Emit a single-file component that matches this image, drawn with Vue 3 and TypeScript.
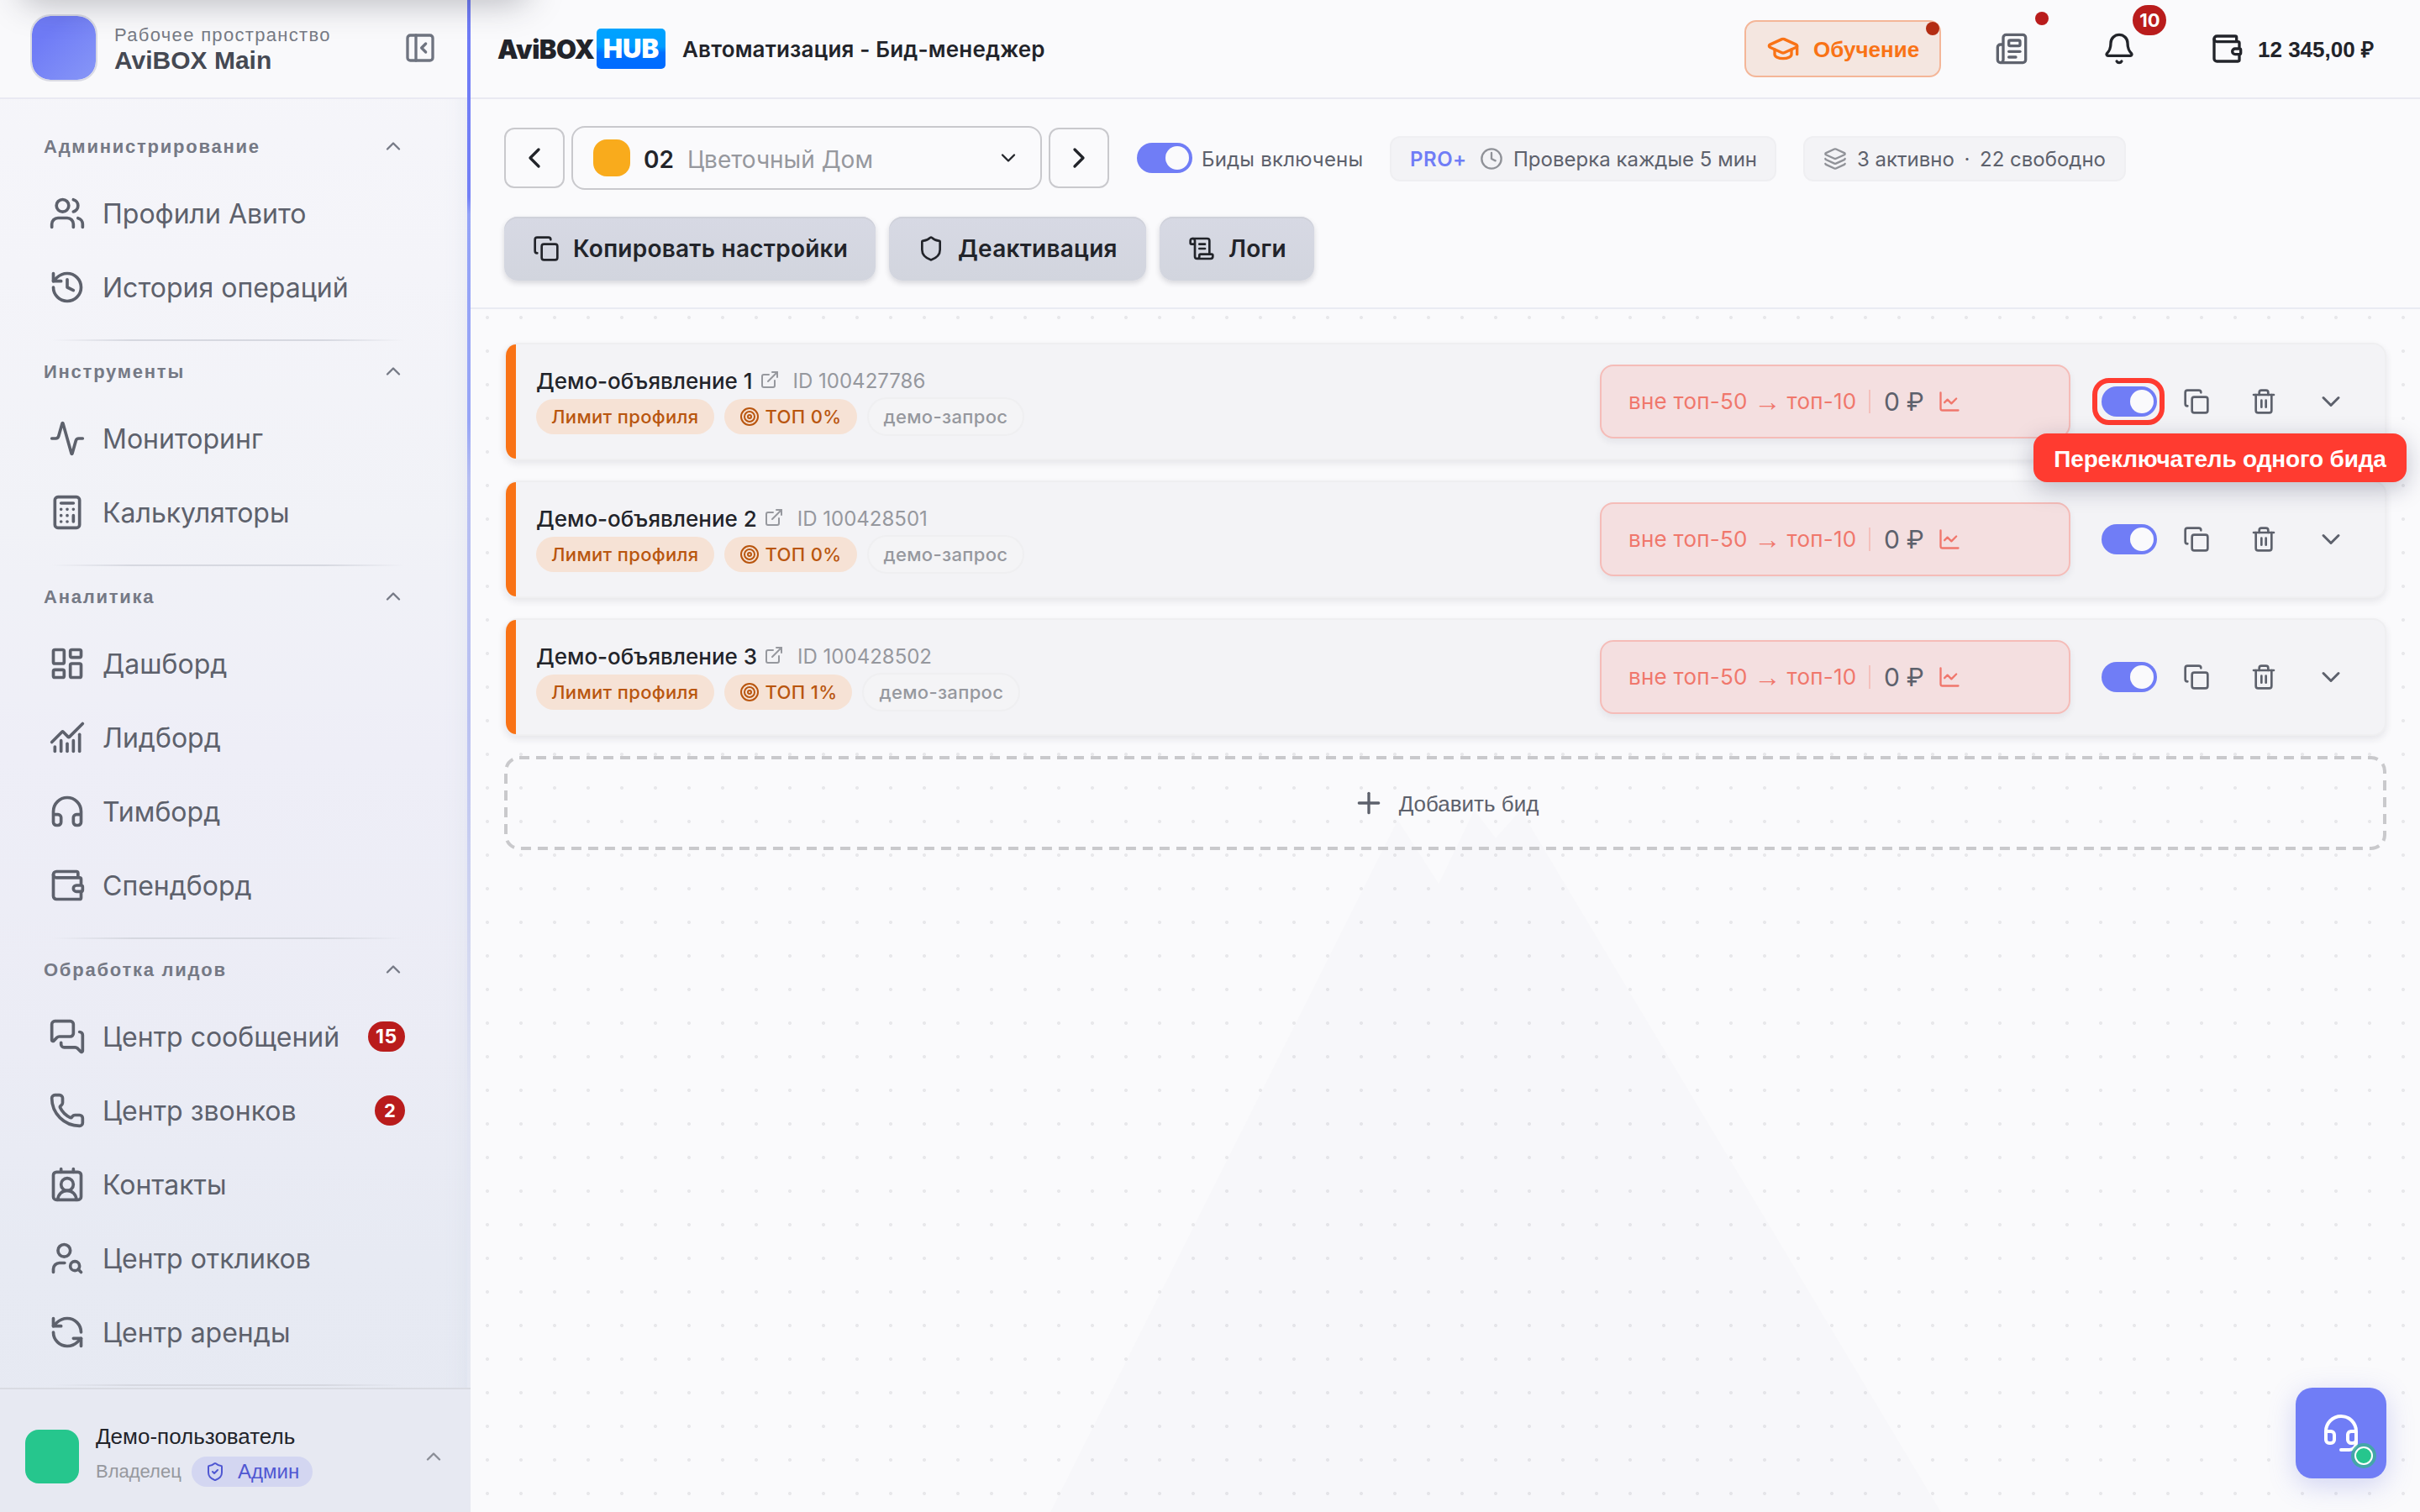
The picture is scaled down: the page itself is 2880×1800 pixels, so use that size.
<script setup lang="ts">
interface NavItem {
  icon: string
  label: string
  badge?: string
}
interface NavSection {
  title: string
  items: NavItem[]
}
interface Bid {
  title: string
  id: string
  top: string
  highlighted?: boolean
}

const icons: Record<string, string> = {
  panel: '<rect x="3" y="3" width="18" height="18" rx="2"/><path d="M9 3v18"/><path d="m16 15-3-3 3-3"/>',
  users: '<path d="M16 21v-2a4 4 0 0 0-4-4H6a4 4 0 0 0-4 4v2"/><circle cx="9" cy="7" r="4"/><path d="M22 21v-2a4 4 0 0 0-3-3.87"/><path d="M16 3.13a4 4 0 0 1 0 7.75"/>',
  history: '<path d="M3 12a9 9 0 1 0 9-9 9.75 9.75 0 0 0-6.74 2.74L3 8"/><path d="M3 3v5h5"/><path d="M12 7v5l4 2"/>',
  activity: '<path d="M22 12h-2.48a2 2 0 0 0-1.93 1.46l-2.35 8.36a.25.25 0 0 1-.48 0L9.24 2.18a.25.25 0 0 0-.48 0l-2.35 8.36A2 2 0 0 1 4.49 12H2"/>',
  calculator: '<rect x="4" y="2" width="16" height="20" rx="2"/><path d="M8 6h8"/><path d="M16 14v4"/><path d="M16 10h.01M12 10h.01M8 10h.01M12 14h.01M8 14h.01M12 18h.01M8 18h.01"/>',
  dashboard: '<rect x="3" y="3" width="7" height="9" rx="1"/><rect x="14" y="3" width="7" height="5" rx="1"/><rect x="14" y="12" width="7" height="9" rx="1"/><rect x="3" y="16" width="7" height="5" rx="1"/>',
  chartCombined: '<path d="M12 16v5"/><path d="M16 14v7"/><path d="M20 10v11"/><path d="m22 3-8.646 8.646a.5.5 0 0 1-.708 0L9.354 8.354a.5.5 0 0 0-.707 0L2 15"/><path d="M4 18v3"/><path d="M8 14v7"/>',
  headphones: '<path d="M3 14h3a2 2 0 0 1 2 2v3a2 2 0 0 1-2 2H5a2 2 0 0 1-2-2v-7a9 9 0 0 1 18 0v7a2 2 0 0 1-2 2h-1a2 2 0 0 1-2-2v-3a2 2 0 0 1 2-2h3"/>',
  wallet: '<path d="M19 7V4a1 1 0 0 0-1-1H5a2 2 0 0 0 0 4h15a1 1 0 0 1 1 1v4h-3a2 2 0 0 0 0 4h3a1 1 0 0 0 1-1v-2a1 1 0 0 0-1-1"/><path d="M3 5v14a2 2 0 0 0 2 2h15a1 1 0 0 0 1-1v-4"/>',
  messages: '<path d="M16 10a2 2 0 0 1-2 2H6.828a2 2 0 0 0-1.414.586l-2.202 2.202A.71.71 0 0 1 2 14.286V4a2 2 0 0 1 2-2h10a2 2 0 0 1 2 2z"/><path d="M20 9a2 2 0 0 1 2 2v10.286a.71.71 0 0 1-1.212.502l-2.202-2.202A2 2 0 0 0 17.172 19H10a2 2 0 0 1-2-2v-1"/>',
  phone: '<path d="M13.832 16.568a1 1 0 0 0 1.213-.303l.355-.465A2 2 0 0 1 17 15h3a2 2 0 0 1 2 2v3a2 2 0 0 1-2 2A18 18 0 0 1 2 4a2 2 0 0 1 2-2h3a2 2 0 0 1 2 2v3a2 2 0 0 1-.8 1.6l-.468.351a1 1 0 0 0-.292 1.233 14 14 0 0 0 6.392 6.384"/>',
  contact: '<path d="M16 2v2"/><path d="M17.915 22a6 6 0 0 0-12 0"/><path d="M8 2v2"/><circle cx="12" cy="12" r="4"/><rect x="3" y="4" width="18" height="18" rx="2"/>',
  userSearch: '<circle cx="10" cy="7" r="4"/><path d="M10.3 15H7a4 4 0 0 0-4 4v2"/><circle cx="17" cy="17" r="3"/><path d="m21 21-1.9-1.9"/>',
  refresh: '<path d="M21 12a9 9 0 0 0-9-9 9.75 9.75 0 0 0-6.74 2.74L3 8"/><path d="M3 3v5h5"/><path d="M3 12a9 9 0 0 0 9 9 9.75 9.75 0 0 0 6.74-2.74L21 16"/><path d="M16 16h5v5"/>',
  shieldCheck: '<path d="M20 13c0 5-3.5 7.5-7.66 8.95a1 1 0 0 1-.67-.01C7.5 20.5 4 18 4 13V6a1 1 0 0 1 1-1c2 0 4.5-1.2 6.24-2.72a1.17 1.17 0 0 1 1.52 0C14.51 3.81 17 5 19 5a1 1 0 0 1 1 1z"/><path d="m9 12 2 2 4-4"/>',
  shield: '<path d="M20 13c0 5-3.5 7.5-7.66 8.95a1 1 0 0 1-.67-.01C7.5 20.5 4 18 4 13V6a1 1 0 0 1 1-1c2 0 4.5-1.2 6.24-2.72a1.17 1.17 0 0 1 1.52 0C14.51 3.81 17 5 19 5a1 1 0 0 1 1 1z"/>',
  education: '<path d="M21.42 10.922a1 1 0 0 0-.019-1.838L12.83 5.18a2 2 0 0 0-1.66 0L2.6 9.08a1 1 0 0 0 0 1.832l8.57 3.908a2 2 0 0 0 1.66 0z"/><path d="M22 10v6"/><path d="M6 12.5V16a6 3 0 0 0 12 0v-3.5"/>',
  news: '<path d="M15 18h-5"/><path d="M18 14h-8"/><path d="M4 22h16a2 2 0 0 0 2-2V4a2 2 0 0 0-2-2H8a2 2 0 0 0-2 2v16a2 2 0 0 1-4 0v-9a2 2 0 0 1 2-2h2"/><rect x="10" y="6" width="8" height="4" rx="1"/>',
  bell: '<path d="M10.268 21a2 2 0 0 0 3.464 0"/><path d="M3.262 15.326A1 1 0 0 0 4 17h16a1 1 0 0 0 .74-1.673C19.41 13.956 18 12.499 18 8A6 6 0 0 0 6 8c0 4.499-1.411 5.956-2.738 7.326"/>',
  clock: '<circle cx="12" cy="12" r="10"/><path d="M12 6v6l4 2"/>',
  layers: '<path d="M12.83 2.18a2 2 0 0 0-1.66 0L2.6 6.08a1 1 0 0 0 0 1.83l8.58 3.91a2 2 0 0 0 1.66 0l8.58-3.9a1 1 0 0 0 0-1.83z"/><path d="M2 12a1 1 0 0 0 .58.91l8.6 3.91a2 2 0 0 0 1.65 0l8.58-3.9A1 1 0 0 0 22 12"/><path d="M2 17a1 1 0 0 0 .58.91l8.6 3.91a2 2 0 0 0 1.65 0l8.58-3.9A1 1 0 0 0 22 17"/>',
  copy: '<rect x="8" y="8" width="14" height="14" rx="2"/><path d="M4 16c-1.1 0-2-.9-2-2V4c0-1.1.9-2 2-2h10c1.1 0 2 .9 2 2"/>',
  scroll: '<path d="M15 12h-5"/><path d="M15 8h-5"/><path d="M19 17V5a2 2 0 0 0-2-2H4"/><path d="M8 21h12a2 2 0 0 0 2-2v-1a1 1 0 0 0-1-1H11a1 1 0 0 0-1 1v1a2 2 0 1 1-4 0V5a2 2 0 1 0-4 0v2a1 1 0 0 0 1 1h3"/>',
  external: '<path d="M15 3h6v6"/><path d="M10 14 21 3"/><path d="M18 13v6a2 2 0 0 1-2 2H5a2 2 0 0 1-2-2V8a2 2 0 0 1 2-2h6"/>',
  target: '<circle cx="12" cy="12" r="10"/><circle cx="12" cy="12" r="6"/><circle cx="12" cy="12" r="2"/>',
  chart: '<path d="M3 3v16a2 2 0 0 0 2 2h16"/><path d="m19 9-5 5-4-4-3 3"/>',
  trash: '<path d="M3 6h18"/><path d="M19 6v14a2 2 0 0 1-2 2H7a2 2 0 0 1-2-2V6"/><path d="M8 6V4a2 2 0 0 1 2-2h4a2 2 0 0 1 2 2v2"/><path d="M10 11v6"/><path d="M14 11v6"/>',
  plus: '<path d="M5 12h14"/><path d="M12 5v14"/>',
  headset: '<path d="M3 11h3a2 2 0 0 1 2 2v3a2 2 0 0 1-2 2H5a2 2 0 0 1-2-2v-5Zm0 0a9 9 0 1 1 18 0m0 0v5a2 2 0 0 1-2 2h-1a2 2 0 0 1-2-2v-3a2 2 0 0 1 2-2h3Z"/><path d="M21 16v2a4 4 0 0 1-4 4h-5"/>',
  up: '<path d="m18 15-6-6-6 6"/>',
  down: '<path d="m6 9 6 6 6-6"/>',
  left: '<path d="m15 18-6-6 6-6"/>',
  right: '<path d="m9 18 6-6-6-6"/>'
}

const sections: NavSection[] = [
  { title: 'Администрирование', items: [
    { icon: 'users', label: 'Профили Авито' },
    { icon: 'history', label: 'История операций' }
  ] },
  { title: 'Инструменты', items: [
    { icon: 'activity', label: 'Мониторинг' },
    { icon: 'calculator', label: 'Калькуляторы' }
  ] },
  { title: 'Аналитика', items: [
    { icon: 'dashboard', label: 'Дашборд' },
    { icon: 'chartCombined', label: 'Лидборд' },
    { icon: 'headphones', label: 'Тимборд' },
    { icon: 'wallet', label: 'Спендборд' }
  ] },
  { title: 'Обработка лидов', items: [
    { icon: 'messages', label: 'Центр сообщений', badge: '15' },
    { icon: 'phone', label: 'Центр звонков', badge: '2' },
    { icon: 'contact', label: 'Контакты' },
    { icon: 'userSearch', label: 'Центр откликов' },
    { icon: 'refresh', label: 'Центр аренды' }
  ] }
]

const actions = [
  { icon: 'copy', label: 'Копировать настройки', cls: 'w-copy' },
  { icon: 'shield', label: 'Деактивация', cls: 'w-off' },
  { icon: 'scroll', label: 'Логи', cls: 'w-logs' }
]

const bids: Bid[] = [
  { title: 'Демо-объявление 1', id: 'ID 100427786', top: 'ТОП 0%', highlighted: true },
  { title: 'Демо-объявление 2', id: 'ID 100428501', top: 'ТОП 0%' },
  { title: 'Демо-объявление 3', id: 'ID 100428502', top: 'ТОП 1%' }
]
</script>

<template>
  <div class="app">
    <aside class="sidebar">
      <div class="workspace">
        <div class="ws-logo"></div>
        <div class="ws-text">
          <div class="ws-label">Рабочее пространство</div>
          <div class="ws-name">AviBOX Main</div>
        </div>
        <svg class="icon i40 ws-collapse" viewBox="0 0 24 24" v-html="icons.panel"></svg>
      </div>
      <nav class="nav">
        <section v-for="s in sections" :key="s.title" class="nav-section">
          <div class="nav-head">
            <span>{{ s.title }}</span>
            <svg class="icon i28" viewBox="0 0 24 24" v-html="icons.up"></svg>
          </div>
          <a v-for="it in s.items" :key="it.label" class="nav-item">
            <svg class="icon i44" viewBox="0 0 24 24" v-html="icons[it.icon]"></svg>
            <span class="nav-label">{{ it.label }}</span>
            <span v-if="it.badge" class="nav-badge" :class="{ wide: it.badge.length > 1 }">{{ it.badge }}</span>
          </a>
          <div class="nav-divider"></div>
        </section>
      </nav>
      <div class="user">
        <div class="user-avatar"></div>
        <div class="user-info">
          <div class="user-name">Демо-пользователь</div>
          <div class="user-meta">
            <span class="user-role">Владелец</span>
            <span class="user-pill">
              <svg class="icon i24" viewBox="0 0 24 24" v-html="icons.shieldCheck"></svg>
              <span>Админ</span>
            </span>
          </div>
        </div>
        <svg class="icon i28 user-chevron" viewBox="0 0 24 24" v-html="icons.up"></svg>
      </div>
      <div class="accent"></div>
    </aside>

    <main class="main">
      <header class="header">
        <div class="logo"><span class="logo-a">AviBOX</span><span class="logo-b">HUB</span></div>
        <h1 class="page-title">Автоматизация - Бид-менеджер</h1>
        <div class="header-right">
          <div class="edu">
            <svg class="icon i40" viewBox="0 0 24 24" v-html="icons.education"></svg>
            <span>Обучение</span>
            <i class="edu-dot"></i>
          </div>
          <div class="hicon news">
            <svg class="icon i40" viewBox="0 0 24 24" v-html="icons.news"></svg>
            <i class="news-dot"></i>
          </div>
          <div class="hicon bell">
            <svg class="icon i40" viewBox="0 0 24 24" v-html="icons.bell"></svg>
            <span class="bell-badge">10</span>
          </div>
          <div class="balance">
            <svg class="icon i40" viewBox="0 0 24 24" v-html="icons.wallet"></svg>
            <span>12 345,00 ₽</span>
          </div>
        </div>
      </header>

      <div class="toolbar">
        <div class="tool-row">
          <button class="step"><svg class="icon i40" viewBox="0 0 24 24" v-html="icons.left"></svg></button>
          <div class="select">
            <i class="select-swatch"></i>
            <span class="select-num">02</span>
            <span class="select-name">Цветочный Дом</span>
            <svg class="icon i28" viewBox="0 0 24 24" v-html="icons.down"></svg>
          </div>
          <button class="step"><svg class="icon i40" viewBox="0 0 24 24" v-html="icons.right"></svg></button>
          <div class="bids-toggle">
            <span class="toggle"></span>
            <span class="bids-label">Биды включены</span>
          </div>
          <div class="chip chip-plan">
            <b>PRO+</b>
            <svg class="icon i28" viewBox="0 0 24 24" v-html="icons.clock"></svg>
            <span>Проверка каждые 5 мин</span>
          </div>
          <div class="chip chip-slots">
            <svg class="icon i28" viewBox="0 0 24 24" v-html="icons.layers"></svg>
            <span>3 активно</span><span class="dot-sep">·</span><span>22 свободно</span>
          </div>
        </div>
        <div class="action-row">
          <button v-for="a in actions" :key="a.label" class="action" :class="a.cls">
            <svg class="icon i32" viewBox="0 0 24 24" v-html="icons[a.icon]"></svg>
            <span>{{ a.label }}</span>
          </button>
        </div>
      </div>

      <div class="content">
        <div class="backdrop"></div>
        <article v-for="b in bids" :key="b.id" class="card" :class="{ raised: b.highlighted }">
          <div class="bar"></div>
          <div class="card-info">
            <div class="card-title">
              <span class="name">{{ b.title }}</span>
              <svg class="icon i24" viewBox="0 0 24 24" v-html="icons.external"></svg>
              <span class="card-id">{{ b.id }}</span>
            </div>
            <div class="tags">
              <span class="tag">Лимит профиля</span>
              <span class="tag">
                <svg class="icon i24" viewBox="0 0 24 24" v-html="icons.target"></svg>
                <span>{{ b.top }}</span>
              </span>
              <span class="tag ghost">демо-запрос</span>
            </div>
          </div>
          <div class="price">
            <span class="range">вне топ-50 <span class="arrow">→</span> топ-10</span>
            <i class="price-sep"></i>
            <span class="sum">0 ₽</span>
            <svg class="icon i28" viewBox="0 0 24 24" v-html="icons.chart"></svg>
          </div>
          <div class="toggle-wrap">
            <span class="toggle"></span>
            <template v-if="b.highlighted">
              <i class="ring"></i>
              <div class="callout">Переключатель одного бида</div>
            </template>
          </div>
          <button class="ibtn"><svg class="icon i32" viewBox="0 0 24 24" v-html="icons.copy"></svg></button>
          <button class="ibtn"><svg class="icon i32" viewBox="0 0 24 24" v-html="icons.trash"></svg></button>
          <button class="ibtn"><svg class="icon i36" viewBox="0 0 24 24" v-html="icons.down"></svg></button>
        </article>
        <div class="add">
          <svg class="add-frame"><rect x="2" y="2" width="2236" height="108" rx="16" /></svg>
          <svg class="icon i40" viewBox="0 0 24 24" v-html="icons.plus"></svg>
          <span>Добавить бид</span>
        </div>
      </div>
    </main>

    <div class="top-shade"></div>
    <div class="fab">
      <svg class="icon i48" viewBox="0 0 24 24" v-html="icons.headset"></svg>
      <i class="fab-dot"></i>
    </div>
  </div>
</template>

<style>
body { margin: 0; background: #fafafc; }
</style>

<style scoped>
* { box-sizing: border-box; }
.app {
  position: relative;
  display: flex;
  width: 100vw;
  height: 100vh;
  overflow: hidden;
  font-family: Inter, "Liberation Sans", sans-serif;
  color: #22242a;
  background: #fafafc;
}
button { padding: 0; border: 0; background: none; font: inherit; color: inherit; }
.icon { display: block; flex: none; fill: none; stroke: currentColor; stroke-width: 2; stroke-linecap: round; stroke-linejoin: round; }
.i24 { width: 24px; height: 24px; }
.i28 { width: 28px; height: 28px; }
.i32 { width: 32px; height: 32px; }
.i36 { width: 36px; height: 36px; }
.i40 { width: 40px; height: 40px; }
.i44 { width: 44px; height: 44px; }
.i48 { width: 48px; height: 48px; }

/* sidebar */
.sidebar {
  position: relative;
  display: flex;
  flex-direction: column;
  width: 560px;
  flex: none;
  background: linear-gradient(180deg, #f6f6fa 0, #f4f4f9 320px, #f1f2f7 620px, #eeeef7 900px, #ebecf5 1250px, #e7eaf3 1500px, #e6e9f2 100%);
  box-shadow: inset -24px 0 20px -16px rgba(200, 210, 228, .25);
}
.accent {
  position: absolute;
  top: 0;
  right: 0;
  width: 4px;
  height: 1652px;
  background: linear-gradient(180deg, #6f7bf6 0, #7380f6 235px, #94a3f7 255px, #97a5f6 500px, #b6bef2 570px, #bac1f1 860px, #d0d5f0 1100px, #e1e4f2 1300px, #e6e9f2 1652px);
}
.workspace {
  display: flex;
  align-items: center;
  height: 118px;
  padding: 0 0 2px 36px;
  border-bottom: 2px solid #e9e9f3;
  background: #f9f9fb;
}
.ws-logo {
  width: 80px;
  height: 80px;
  border: 2px solid #d9dae3;
  border-radius: 24px;
  background: linear-gradient(135deg, #6f7bf6 25%, #8797f7 100%);
  background-clip: padding-box;
}
.ws-text { margin-left: 20px; padding-top: 2px; font-family: "Liberation Sans", sans-serif; }
.ws-label { font-size: 22px; line-height: 26px; letter-spacing: 1.32px; color: #777b85; }
.ws-name { font-size: 30px; font-weight: 700; line-height: 33px; color: #454953; }
.ws-collapse { margin-left: auto; margin-right: 40px; color: #6f7480; }

.nav { flex: 1; padding-top: 20px; }
.nav-section { display: flex; flex-direction: column; }
.nav-head {
  display: flex;
  align-items: center;
  justify-content: space-between;
  height: 72px;
  padding: 0 78px 0 52px;
  font: 700 22px "Liberation Sans", sans-serif;
  letter-spacing: 1.76px;
  color: #757985;
}
.nav-head span { padding-top: 2px; }
.nav-item { display: flex; align-items: center; height: 88px; padding: 0 78px 0 58px; color: #5d616c; }
.nav-label { margin-left: 20px; font-size: 32px; }
.nav-badge {
  min-width: 36px;
  height: 36px;
  margin-left: auto;
  border-radius: 18px;
  background: #b91c1c;
  color: #fff;
  font-size: 22px;
  font-weight: 700;
  line-height: 36px;
  text-align: center;
}
.nav-badge.wide { width: 44px; font-size: 23px; letter-spacing: .6px; }
.nav-divider {
  height: 2px;
  margin: 18px 70px 0 52px;
  background: linear-gradient(90deg, transparent 2%, #d6d8e0 24%, #d6d8e0 76%, transparent 98%);
}
.user {
  display: flex;
  align-items: center;
  height: 148px;
  padding: 14px 30px 0;
  border-top: 2px solid #d9dbe2;
  background: #e7e9f2;
}
.user-avatar { width: 64px; height: 64px; border-radius: 16px; background: #26c68d; }
.user-info { margin-left: 20px; padding-bottom: 4px; font-family: "Liberation Sans", sans-serif; }
.user-name { margin-bottom: 8px; font-size: 26px; line-height: 32px; color: #22242a; }
.user-meta { display: flex; align-items: center; }
.user-role { font-size: 22px; color: #96989e; width: 114px; }
.user-pill {
  display: flex;
  align-items: center;
  gap: 15px;
  width: 144px;
  height: 36px;
  padding-left: 16px;
  border-radius: 18px;
  background: #d3d6f1;
  color: #4f57d2;
  font-size: 24px;
}
.user-chevron { margin-left: auto; color: #8a8d96; }

/* header */
.main { display: flex; flex-direction: column; flex: 1; min-width: 0; }
.header {
  display: flex;
  align-items: center;
  height: 118px;
  padding: 0 56px 0 32px;
  border-bottom: 2px solid #e9e9f2;
  background: #fafafc;
}
.logo { display: flex; align-items: center; font-weight: 900; font-size: 31px; }
.logo-a { width: 118px; letter-spacing: -.5px; color: #22242a; }
.logo-b {
  width: 82px;
  height: 48px;
  border-radius: 5px;
  background: linear-gradient(180deg, #00a3ff 0, #009dff 45%, #0070ff 60%, #006aff 100%);
  color: #fff;
  line-height: 48px;
  text-align: center;
}
.page-title { margin: 0 0 0 20px; font-size: 26px; font-weight: 600; letter-spacing: .18px; }
.header-right { display: flex; align-items: center; margin-left: auto; }
.edu {
  position: relative;
  display: flex;
  align-items: center;
  gap: 16px;
  width: 234px;
  height: 68px;
  padding-left: 24px;
  border: 2px solid #f4b698;
  border-radius: 14px;
  background: #f4e6e0;
  color: #f97316;
  font: 700 26px "Liberation Sans", sans-serif;
}
.edu span { padding-top: 2px; }
.edu-dot { position: absolute; top: 0; right: 0; width: 16px; height: 16px; border-radius: 50%; background: #b32d13; }
.hicon { position: relative; }
.news { margin-left: 64px; color: #5f636e; }
.news-dot { position: absolute; left: 48px; top: -24px; width: 16px; height: 16px; border-radius: 50%; background: #b91c1c; }
.bell { margin-left: 88px; }
.bell-badge {
  position: absolute;
  left: 36px;
  top: -32px;
  width: 40px;
  height: 36px;
  padding-left: 1px;
  border-radius: 18px;
  background: #b91c1c;
  color: #fff;
  font-size: 22px;
  font-weight: 700;
  line-height: 37px;
  text-align: center;
}
.balance { display: flex; align-items: center; gap: 17px; margin-left: 88px; font: 700 26px "Liberation Sans", sans-serif; }
.balance span { width: 137px; white-space: nowrap; }

/* toolbar */
.toolbar { height: 250px; padding: 32px 40px 0; border-bottom: 2px solid #e9ebf3; background: #fafafc; }
.tool-row { display: flex; align-items: center; height: 76px; }
.step { display: flex; align-items: center; justify-content: center; width: 72px; height: 72px; border: 2px solid #c9c9cd; border-radius: 12px; }
.select {
  display: flex;
  align-items: center;
  width: 560px;
  height: 76px;
  margin: 0 8px;
  padding: 0 24px;
  border: 2px solid #c9c9cd;
  border-radius: 16px;
  font-size: 28px;
}
.select-swatch { width: 44px; height: 44px; border-radius: 16px; background: #f9ab1c; }
.select-num { margin-left: 16px; padding-top: 3px; font-weight: 600; }
.select-name { flex: 1; margin-left: 16px; padding-top: 3px; color: #96989e; }
.toggle { position: relative; display: block; flex: none; width: 66px; height: 36px; border-radius: 18px; background: #707df6; }
.toggle::after {
  content: "";
  position: absolute;
  right: 4px;
  top: 4px;
  width: 28px;
  height: 28px;
  border-radius: 50%;
  background: #fafafc;
}
.bids-toggle { display: flex; align-items: center; gap: 11px; width: 334px; padding-left: 33px; font-size: 24px; letter-spacing: .2px; color: #5d616c; }
.bids-label { padding-top: 3px; white-space: nowrap; }
.chip {
  display: flex;
  align-items: center;
  height: 54px;
  margin-top: 2px;
  padding: 0 22px;
  border: 2px solid #efeff2;
  border-radius: 12px;
  background: #f3f3f6;
  color: #5d616c;
  font-size: 24px;
  white-space: nowrap;
}
.chip .icon { color: #909298; }
.chip-plan { width: 460px; }
.chip-plan b { flex: none; width: 83px; font-weight: 600; letter-spacing: .5px; color: #707df6; }
.chip-plan span { margin-left: 12px; }
.chip-slots { width: 384px; margin-left: 32px; }
.chip-slots .icon { margin-right: 12px; }
.dot-sep { width: 43px; text-align: center; }
.action-row { display: flex; gap: 16px; margin-top: 32px; }
.action {
  display: flex;
  align-items: center;
  gap: 16px;
  height: 76px;
  padding-left: 34px;
  border-radius: 16px;
  background: linear-gradient(180deg, #d7d9e4, #d2d5de);
  box-shadow: 0 3px 6px rgba(30, 32, 50, .16), inset 0 2px 0 #cfd1da;
  font-size: 28px;
  font-weight: 600;
  letter-spacing: .25px;
}
.w-copy { width: 442px; }
.w-off { width: 306px; }
.w-logs { width: 184px; }

/* bids */
.content {
  position: relative;
  flex: 1;
  padding: 40px 40px 0;
  background: radial-gradient(circle at 20px 20px, #e8e8eb 0, #e8e8eb 1.6px, transparent 2.4px) 0 -10px / 40px 40px #fafafc;
}
.backdrop {
  position: absolute;
  left: 690px;
  bottom: 0;
  width: 1060px;
  height: 836px;
  background: rgba(40, 40, 60, .01);
  clip-path: polygon(39% 1.4%, 43.6% 10.5%, 47.6% 0, 50% 4%, 52.8% 0, 100% 100%, 0 100%);
}
.card {
  position: relative;
  display: flex;
  align-items: center;
  height: 140px;
  margin-bottom: 24px;
  padding-right: 32px;
  border: 2px solid #efeff1;
  border-radius: 16px;
  background: #f3f3f6;
  box-shadow: 0 4px 8px rgba(30, 32, 50, .09);
}
.card.raised { z-index: 2; }
.bar { width: 12px; height: 100%; border-radius: 12px 0 0 12px / 14px 0 0 14px; background: #f97316; }
.card-info { flex: 1; margin-left: 24px; padding-bottom: 2px; }
.card-title { display: flex; align-items: center; height: 34px; margin-bottom: 4px; font-size: 26px; }
.card-title .name { padding-top: 2px; font-weight: 500; }
.card-title .icon { margin: 0 16px 0 8px; color: #96989e; }
.card-id { padding-top: 2px; font-size: 24px; color: #96989e; }
.tags { display: flex; align-items: center; gap: 12px; height: 46px; }
.tag {
  display: flex;
  align-items: center;
  gap: 7px;
  height: 42px;
  padding: 0 18px;
  border-radius: 21px;
  background: #f6e2d5;
  color: #b9560f;
  font-size: 22px;
  font-weight: 500;
  letter-spacing: .35px;
}
.tag.ghost { height: 46px; border: 2px solid #efeff1; border-radius: 23px; background: #f4f4f6; color: #96989e; }
.price {
  display: flex;
  align-items: center;
  width: 560px;
  height: 88px;
  padding-left: 32px;
  border: 2px solid #f5bcb8;
  border-radius: 16px;
  background: #f4dfe0;
  box-shadow: 0 4px 8px rgba(30, 32, 50, .07);
  color: #f0776c;
}
.range { display: flex; align-items: center; width: 271px; font-size: 26px; line-height: 32px; letter-spacing: .25px; white-space: pre; }
.arrow { font-family: "Liberation Sans", sans-serif; font-size: 32px; line-height: 32px; letter-spacing: -.4px; }
.price-sep { width: 2px; height: 28px; margin: 0 16px 0 15px; background: #f4c0bc; }
.sum { font-size: 30px; letter-spacing: -.3px; color: #5d616c; }
.price .icon { margin-left: 16px; }
.toggle-wrap { position: relative; margin: 0 15px 0 37px; }
.ring { position: absolute; inset: -10px -9px -10px -11px; border: 6px solid #ff3b30; border-radius: 20px; }
.callout {
  position: absolute;
  left: -81px;
  top: 56px;
  width: 444px;
  height: 58px;
  border-radius: 16px;
  background: #ff3b30;
  box-shadow: 0 8px 28px rgba(20, 24, 60, .26);
  color: #fff;
  font: 700 28px/61px "Liberation Sans", sans-serif;
  letter-spacing: -.18px;
  text-align: center;
  white-space: nowrap;
}
.ibtn { display: flex; align-items: center; justify-content: center; width: 64px; height: 64px; color: #5d616c; }
.ibtn + .ibtn { margin-left: 16px; }
.add {
  position: relative;
  display: flex;
  align-items: center;
  justify-content: center;
  gap: 16px;
  height: 112px;
  color: #5d616c;
  font: 26px "Liberation Sans", sans-serif;
}
.add span { padding-top: 2px; }
.add-frame { position: absolute; inset: 0; width: 100%; height: 100%; }
.add-frame rect { fill: none; stroke: #c9c9cc; stroke-width: 4; stroke-dasharray: 12 8; }

/* overlays */
.top-shade { position: absolute; left: 24px; top: -40px; width: 606px; height: 40px; border-radius: 20px; box-shadow: 0 2px 40px rgba(40, 44, 60, .34); }
.fab {
  position: absolute;
  right: 40px;
  bottom: 40px;
  display: flex;
  align-items: center;
  justify-content: center;
  width: 108px;
  height: 108px;
  border-radius: 20px;
  background: #707df6;
  box-shadow: 0 8px 32px rgba(100, 110, 220, .28);
  color: #fff;
}
.fab-dot { position: absolute; left: 70px; top: 70px; width: 22px; height: 22px; border: 2px solid #fff; border-radius: 50%; background: #26c68d; box-shadow: 0 0 0 4px rgba(58, 176, 150, .8); }
</style>
